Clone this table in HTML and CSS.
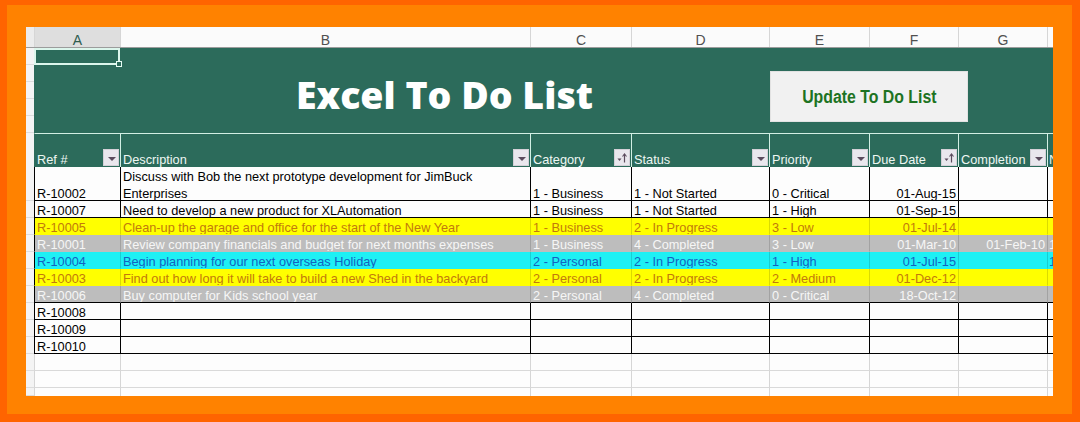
FILE: index.html
```html
<!DOCTYPE html>
<html>
<head>
<meta charset="utf-8">
<title>Excel To Do List</title>
<link rel="stylesheet" href="styles.css">
</head>
<body>
<div class="frame">
  <div class="sheet">
    <div class="row colhdr">
      <div class="rh"></div>
      <div class="ch sel">A</div>
      <div class="ch">B</div>
      <div class="ch">C</div>
      <div class="ch">D</div>
      <div class="ch">E</div>
      <div class="ch">F</div>
      <div class="ch">G</div>
      <div class="ch"></div>
    </div>

    <div class="banner">
      <div class="rh"></div>
      <div class="selcell"><span class="handle"></span></div>
      <h1 class="title">Excel To Do List</h1>
      <button class="update"><span class="update-label">Update To Do List</span></button>
    </div>

    <div class="row thead">
      <div class="rh"></div>
      <div class="th first"><span>Ref #</span><i class="dd"></i></div>
      <div class="th"><span>Description</span><i class="dd"></i></div>
      <div class="th"><span>Category</span><i class="dd sort"><svg width="14" height="15" viewBox="0 0 14 15"><path d="M2.5 8.5h4l-2 2.5z" fill="#5b4b5d"/><path d="M9.5 12.5V4.5" stroke="#5b4b5d" stroke-width="1.2"/><path d="M7.5 6.5l2-2.5 2 2.5" fill="none" stroke="#5b4b5d" stroke-width="1.1"/></svg></i></div>
      <div class="th"><span>Status</span><i class="dd"></i></div>
      <div class="th"><span>Priority</span><i class="dd"></i></div>
      <div class="th"><span>Due Date</span><i class="dd sort"><svg width="14" height="15" viewBox="0 0 14 15"><path d="M2.5 8.5h4l-2 2.5z" fill="#5b4b5d"/><path d="M9.5 12.5V4.5" stroke="#5b4b5d" stroke-width="1.2"/><path d="M7.5 6.5l2-2.5 2 2.5" fill="none" stroke="#5b4b5d" stroke-width="1.1"/></svg></i></div>
      <div class="th"><span>Completion</span><i class="dd"></i></div>
      <div class="th edge"><span>Notes</span></div>
    </div>

    <div class="row tall w">
      <div class="rh"></div>
      <div class="cell bot">R-10002</div>
      <div class="cell wrap">Discuss with Bob the next prototype development for JimBuck Enterprises</div>
      <div class="cell bot">1 - Business</div>
      <div class="cell bot">1 - Not Started</div>
      <div class="cell bot">0 - Critical</div>
      <div class="cell bot num">01-Aug-15</div>
      <div class="cell bot num"></div>
      <div class="cell edge"></div>
    </div>
    <div class="row w">
      <div class="rh"></div>
      <div class="cell">R-10007</div>
      <div class="cell">Need to develop a new product for XLAutomation</div>
      <div class="cell">1 - Business</div>
      <div class="cell">1 - Not Started</div>
      <div class="cell">1 - High</div>
      <div class="cell num">01-Sep-15</div>
      <div class="cell num"></div>
      <div class="cell edge"></div>
    </div>
    <div class="row y">
      <div class="rh"></div>
      <div class="cell">R-10005</div>
      <div class="cell">Clean-up the garage and office for the start of the New Year</div>
      <div class="cell">1 - Business</div>
      <div class="cell">2 - In Progress</div>
      <div class="cell">3 - Low</div>
      <div class="cell num">01-Jul-14</div>
      <div class="cell num"></div>
      <div class="cell edge"></div>
    </div>
    <div class="row g">
      <div class="rh"></div>
      <div class="cell">R-10001</div>
      <div class="cell">Review company financials and budget for next months expenses</div>
      <div class="cell">1 - Business</div>
      <div class="cell">4 - Completed</div>
      <div class="cell">3 - Low</div>
      <div class="cell num">01-Mar-10</div>
      <div class="cell num">01-Feb-10</div>
      <div class="cell edge">1</div>
    </div>
    <div class="row c">
      <div class="rh"></div>
      <div class="cell">R-10004</div>
      <div class="cell">Begin planning for our next overseas Holiday</div>
      <div class="cell">2 - Personal</div>
      <div class="cell">2 - In Progress</div>
      <div class="cell">1 - High</div>
      <div class="cell num">01-Jul-15</div>
      <div class="cell num"></div>
      <div class="cell edge">1</div>
    </div>
    <div class="row y">
      <div class="rh"></div>
      <div class="cell">R-10003</div>
      <div class="cell">Find out how long it will take to build a new Shed in the backyard</div>
      <div class="cell">2 - Personal</div>
      <div class="cell">2 - In Progress</div>
      <div class="cell">2 - Medium</div>
      <div class="cell num">01-Dec-12</div>
      <div class="cell num"></div>
      <div class="cell edge"></div>
    </div>
    <div class="row g lastc">
      <div class="rh"></div>
      <div class="cell">R-10006</div>
      <div class="cell">Buy computer for Kids school year</div>
      <div class="cell">2 - Personal</div>
      <div class="cell">4 - Completed</div>
      <div class="cell">0 - Critical</div>
      <div class="cell num">18-Oct-12</div>
      <div class="cell num"></div>
      <div class="cell edge"></div>
    </div>
    <div class="row w">
      <div class="rh"></div>
      <div class="cell">R-10008</div>
      <div class="cell"></div><div class="cell"></div><div class="cell"></div>
      <div class="cell"></div><div class="cell"></div><div class="cell"></div><div class="cell edge"></div>
    </div>
    <div class="row w">
      <div class="rh"></div>
      <div class="cell">R-10009</div>
      <div class="cell"></div><div class="cell"></div><div class="cell"></div>
      <div class="cell"></div><div class="cell"></div><div class="cell"></div><div class="cell edge"></div>
    </div>
    <div class="row w">
      <div class="rh"></div>
      <div class="cell">R-10010</div>
      <div class="cell"></div><div class="cell"></div><div class="cell"></div>
      <div class="cell"></div><div class="cell"></div><div class="cell"></div><div class="cell edge"></div>
    </div>
    <div class="row e">
      <div class="rh"></div>
      <div class="cell"></div><div class="cell"></div><div class="cell"></div><div class="cell"></div>
      <div class="cell"></div><div class="cell"></div><div class="cell"></div><div class="cell edge"></div>
    </div>
    <div class="row e">
      <div class="rh"></div>
      <div class="cell"></div><div class="cell"></div><div class="cell"></div><div class="cell"></div>
      <div class="cell"></div><div class="cell"></div><div class="cell"></div><div class="cell edge"></div>
    </div>
    <div class="row e part">
      <div class="rh"></div>
      <div class="cell"></div><div class="cell"></div><div class="cell"></div><div class="cell"></div>
      <div class="cell"></div><div class="cell"></div><div class="cell"></div><div class="cell edge"></div>
    </div>
  </div>
</div>
</body>
</html>
```

FILE: styles.css
```css
* {
  box-sizing: border-box;
  margin: 0;
  padding: 0;
}

html, body {
  width: 1080px;
  height: 422px;
  overflow: hidden;
}

body {
  font-family: "Liberation Sans", Arial, sans-serif;
  background: #ff6400;
}

.frame {
  width: 1080px;
  height: 422px;
  border-style: solid;
  border-color: #ff6400;
  border-width: 5px 8px 8px 7px;
  background: #ff8200;
  padding: 22px 19px 18px 19px;
}

.sheet {
  --cols: 8px 86px 410px 101px 138px 100px 89px 89px 6px;
  width: 1027px;
  height: 369px;
  background: #fcfcfc;
  overflow: hidden;
}

.row {
  display: grid;
  grid-template-columns: var(--cols);
  height: 17px;
}

.rh {
  background: #f4f4f4;
  border-bottom: 1px solid #dcdcdc;
}

/* column letters */
.colhdr {
  height: 21px;
  border-bottom: 1px solid #9c9c9c;
  background: #fbfbfb;
}

.colhdr .rh {
  border-bottom: none;
  background: #ececec;
}

.ch {
  border-left: 1px solid #d6d6d6;
  color: #505050;
  font-size: 14px;
  line-height: 20px;
  padding-top: 3px;
  text-align: center;
  overflow: hidden;
}

.ch.sel {
  background: #dedede;
  color: #2f5c4f;
}

/* green banner */
.banner {
  display: grid;
  grid-template-columns: var(--cols);
  grid-template-rows: 17px 68px;
  height: 85px;
  background: #2c6b5b;
}

.banner .rh {
  grid-column: 1;
  grid-row: 1 / -1;
  border-bottom: none;
  background: repeating-linear-gradient(to bottom, #f4f4f4 0 16px, #dcdcdc 16px 17px);
}

.selcell {
  grid-column: 2;
  grid-row: 1;
  border: 2px solid #dcf6ec;
  position: relative;
}

.handle {
  position: absolute;
  right: -4px;
  bottom: -4px;
  width: 6px;
  height: 6px;
  background: #2c6b5b;
  border: 1px solid #e6fbf3;
}

.title {
  grid-column: 3 / 6;
  grid-row: 1 / -1;
  align-self: center;
  justify-self: center;
  padding-top: 9px;
  font-family: "Open Sans", "Liberation Sans", sans-serif;
  font-weight: 800;
  font-size: 37.5px;
  line-height: 1;
  color: #ffffff;
  white-space: nowrap;
}

.update {
  grid-column: 6 / 10;
  grid-row: 1 / -1;
  align-self: start;
  justify-self: start;
  display: flex;
  align-items: center;
  justify-content: center;
  margin: 23px 0 0 1px;
  width: 198px;
  height: 51px;
  background: #f1f1f1;
  border: none;
  box-shadow: inset 0 0 0 1px #e2e2e2;
  font-family: "Liberation Sans", Arial, sans-serif;
  font-weight: 700;
  font-size: 18px;
  color: #1d7322;
  padding-top: 2px;
}

.update-label {
  display: inline-block;
  white-space: nowrap;
  transform: scaleX(0.88);
}

/* table header */
.thead {
  height: 34px;
}

.thead .rh {
  border-bottom: none;
}

.th {
  display: flex;
  align-items: flex-end;
  justify-content: space-between;
  background: #2c6b5b;
  border-top: 1px solid #d2efe4;
  border-left: 1px solid #d2efe4;
  padding-left: 2px;
  color: #eef7f3;
  font-size: 12.75px;
  line-height: 17px;
  white-space: nowrap;
  overflow: hidden;
}

.th.first {
  border-left-color: #2c6b5b;
}

.th span {
  margin-bottom: -1px;
}

.dd {
  flex: none;
  display: flex;
  align-items: center;
  justify-content: center;
  width: 16px;
  height: 17px;
  margin: 0 1px 1px 0;
  background: #e9e7ed;
  border: 1px solid #d3d0d7;
}

.dd::after {
  content: "";
  margin-top: 2px;
  margin-left: 2px;
  border-left: 4px solid transparent;
  border-right: 4px solid transparent;
  border-top: 4px solid #5b4b5d;
}

.dd.sort::after {
  display: none;
}

/* data cells */
.cell {
  border-left: 1px solid #000;
  border-bottom: 1px solid #000;
  padding: 1px 2px 0 2px;
  font-size: 12.75px;
  line-height: 17px;
  white-space: nowrap;
  overflow: hidden;
}

.th.edge, .cell.edge {
  padding-left: 1px;
  padding-right: 0;
}

.tall {
  height: 34px;
}

.cell.bot {
  padding-top: 18px;
}

.cell.wrap {
  white-space: normal;
}

.num {
  text-align: right;
}

.w {
  background: #fdfdfd;
  color: #000;
}

.y {
  background: #ffff00;
  color: #c27a0c;
}

.g {
  background: #bdbdbd;
  color: #f6f6f6;
}

.c {
  background: #1ef0f4;
  color: #1462c2;
}

.y .cell, .g .cell, .c .cell {
  border-left-color: rgba(0, 0, 0, 0.14);
  border-bottom-color: transparent;
}

.y .cell:nth-child(2), .g .cell:nth-child(2), .c .cell:nth-child(2) {
  border-left-color: #000;
}

.lastc .cell {
  border-bottom-color: #000;
}

.e {
  background: #fdfdfd;
}

.e .cell {
  border-left-color: #d6d6d6;
  border-bottom-color: #d9d9d9;
}

.part {
  height: 8px;
}

.part .cell {
  border-bottom: none;
}
```
